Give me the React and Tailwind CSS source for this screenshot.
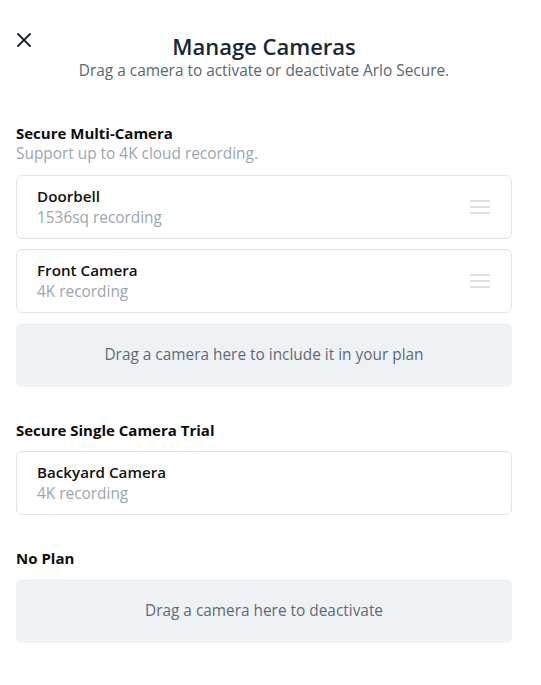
import { X } from 'lucide-react';

const font = { fontFamily: '"Open Sans", "Noto Sans", sans-serif' };

function DragHandle() {
  return (
    <div className="flex flex-col gap-[4px] w-5">
      <span className="block h-[2px] bg-[#dce1e6]" />
      <span className="block h-[2px] bg-[#dce1e6]" />
      <span className="block h-[2px] bg-[#dce1e6]" />
    </div>
  );
}

function CameraCard({ name, detail, draggable }) {
  return (
    <div className="flex items-center justify-between h-16 pl-5 pr-[21px] border border-[#e1e4e8] rounded-md bg-white">
      <div className="flex flex-col">
        <span className="text-[15.2px] leading-[21px] font-semibold text-[#111]">{name}</span>
        <span className="text-[15.4px] leading-[21px] text-[#9ba5af]">{detail}</span>
      </div>
      {draggable && <DragHandle />}
    </div>
  );
}

function DropZone({ text }) {
  return (
    <div className="flex items-center justify-center h-16 rounded-md bg-[#eff2f5] text-[15.4px] text-[#5f6b76]">
      {text}
    </div>
  );
}

function Section({ title, subtitle, children }) {
  return (
    <section className="flex flex-col">
      <h2 className="text-[15px] leading-5 font-bold text-[#0d0d0d]">{title}</h2>
      {subtitle && <p className="text-[15.4px] leading-5 mt-[1px] text-[#9ba5af]">{subtitle}</p>}
      <div className="flex flex-col gap-[10px] mt-[11px]">{children}</div>
    </section>
  );
}

export default function App() {
  return (
    <div style={font} className="min-h-[685px] bg-white pl-4 pr-[29px]">
      {/* Header */}
      <header className="relative flex flex-col items-center pt-[31px]">
        <button className="absolute left-[-4px] top-[28px] text-[#1f2a33]">
          <X size={24} strokeWidth={2} />
        </button>
        <h1 className="text-[22px] leading-[30px] font-semibold text-[#1b2733]">Manage Cameras</h1>
        <p className="text-[15.4px] leading-5 text-[#5b6670]">
          Drag a camera to activate or deactivate Arlo Secure.
        </p>
      </header>

      <div className="flex flex-col gap-[33px] mt-[42px]">
        <Section title="Secure Multi-Camera" subtitle="Support up to 4K cloud recording.">
          <CameraCard name="Doorbell" detail="1536sq recording" draggable />
          <CameraCard name="Front Camera" detail="4K recording" draggable />
          <DropZone text="Drag a camera here to include it in your plan" />
        </Section>

        <Section title="Secure Single Camera Trial">
          <CameraCard name="Backyard Camera" detail="4K recording" />
        </Section>

        <Section title="No Plan">
          <DropZone text="Drag a camera here to deactivate" />
        </Section>
      </div>
    </div>
  );
}
